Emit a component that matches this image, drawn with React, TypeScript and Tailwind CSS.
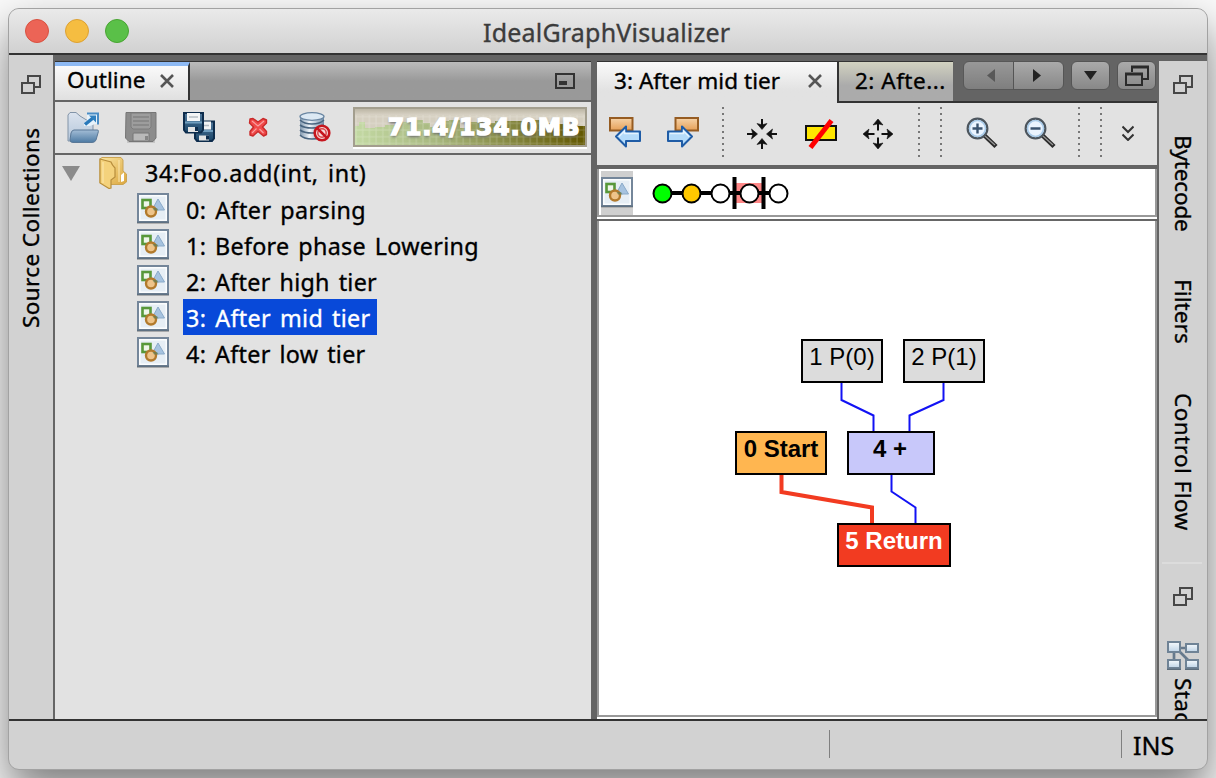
import React from 'react';

const SANS = "font-['Noto_Sans','Open_Sans',sans-serif]";

function RestoreIcon() {
  return (
    <svg width="20" height="19" viewBox="0 0 20 19" fill="none" stroke="#474747" strokeWidth="2" className="block">
      <path d="M7 7V1H19V12H14" />
      <path d="M1 8H13V18H1Z" />
    </svg>
  );
}

function CloseIcon() {
  return (
    <svg width="14" height="14" viewBox="0 0 14 14" stroke="#555" strokeWidth="2.6" className="block">
      <path d="M1 1L13 13M13 1L1 13" />
    </svg>
  );
}

function OpenIcon() {
  return (
    <svg width="32" height="32" viewBox="0 0 32 32" className="block">
      <defs>
        <linearGradient id="openBack" x1="0" y1="0" x2="0" y2="1">
          <stop offset="0" stopColor="#dbe3ee" />
          <stop offset="1" stopColor="#b4c6da" />
        </linearGradient>
        <linearGradient id="openFront" x1="0" y1="0" x2="0" y2="1">
          <stop offset="0" stopColor="#a3bdd6" />
          <stop offset="1" stopColor="#4d7aa3" />
        </linearGradient>
      </defs>
      <path d="M1 29V3L3 .5H9L13 4L26 12V29Z" fill="url(#openBack)" stroke="#8294a8" strokeWidth="1" />
      <path d="M7 18H30C32 18 31.5 19 31 21L29 28Q28 30.500 25 30.500H6Q3 30.500 3 28L4 21Q5 18 7 18Z" fill="url(#openFront)" stroke="#5a7897" strokeWidth="1" />
      <path d="M20 .8H31.200V12H28L23 14H17V12L20 8Z" fill="#e6f2fb" />
      <path d="M20 1.500H31V12.500" stroke="#4a8cc4" strokeWidth="2" fill="none" />
      <path d="M18 12.500L26 6" stroke="#2878ba" strokeWidth="3.500" fill="none" />
      <path d="M22 3.500H29V10.500Z" fill="#2f80bf" />
    </svg>
  );
}

function SaveIcon() {
  return (
    <svg width="32" height="32" viewBox="0 0 32 32" className="block">
      <path d="M2 28H30V31H2Z" fill="#c6c6c6" />
      <path d="M1 .5H31V26L28 29.500H4L.5 26Z" fill="#8c8c8c" stroke="#767676" />
      <path d="M6 1H26V15L24 17H8L6 15Z" fill="#9d9d9d" stroke="#7c7c7c" />
      <path d="M8 5H24M8 9H24M8 13H24" stroke="#838383" strokeWidth="1.500" />
      <path d="M8 22Q8 21 9 21H24V29H8Z" fill="#b9b9b9" stroke="#777" />
      <path d="M20 24H23V28H20Z" fill="#858585" />
    </svg>
  );
}

function Disk({ x, y }: { x: number; y: number }) {
  return (
    <g transform={`translate(${x} ${y})`}>
      <path d="M1 1H20V18L18 20.500H3L1 18Z" fill="url(#diskBody)" stroke="#0d2c4c" strokeWidth="2" />
      <path d="M4 1H17V9H4Z" fill="#f3f5f6" />
      <path d="M6 5H15" stroke="#b4bcc3" strokeWidth="1.500" />
      <path d="M2 10.500H19" stroke="#6f9dbe" strokeWidth="2" />
      <path d="M5 15H15V20H5Z" fill="#e2e3e3" />
      <path d="M12 15H15V19H12Z" fill="#0d2c4c" />
    </g>
  );
}

function SaveAllIcon() {
  return (
    <svg width="32" height="32" viewBox="0 0 32 32" className="block">
      <defs>
        <linearGradient id="diskBody" x1="0" y1="0" x2="0" y2="1">
          <stop offset="0" stopColor="#52799b" />
          <stop offset="1" stopColor="#194467" />
        </linearGradient>
      </defs>
      <Disk x={11} y={8.5} />
      <Disk x={0} y={0} />
    </svg>
  );
}

function DeleteIcon() {
  return (
    <svg width="32" height="32" viewBox="0 0 32 32" className="block">
      <path d="M9 7L12 6.500L17 10L22 6.500L25.500 8V11L21.500 15L25.500 19.500V22.500L22.500 24L17 19.500L12 24L9 23V19.500L12.500 15L8.500 11Z" fill="#f04a4a" stroke="#c92a2a" strokeWidth="1.400" strokeLinejoin="round" />
      <path d="M11 9L17 14L23 9M11 21L15.500 16.500M22.500 21L18.500 17" stroke="#f9a0a0" strokeWidth="1.200" fill="none" />
    </svg>
  );
}

function DatabaseIcon() {
  return (
    <svg width="32" height="32" viewBox="0 0 32 32" className="block">
      <defs>
        <linearGradient id="dbBody" x1="0" y1="0" x2="1" y2="0">
          <stop offset="0" stopColor="#8299b0" />
          <stop offset=".4" stopColor="#f0f5fa" />
          <stop offset="1" stopColor="#718ca8" />
        </linearGradient>
      </defs>
      <path d="M1 4V24Q5 28 13 28T25 24V4Z" fill="url(#dbBody)" />
      <path d="M1 8Q5 12 13 12T25 8M1 13Q5 16 13 16T25 13M1 18Q5 21 13 21T25 18M1 23Q5 27 13 27T25 23" fill="none" stroke="#49647f" strokeWidth="1.600" />
      <ellipse cx="13" cy="4.500" rx="12" ry="3.800" fill="#dce9f4" stroke="#6a86a2" strokeWidth="1.300" />
      <circle cx="23" cy="21" r="7.300" fill="#f6dada" stroke="#c6161e" strokeWidth="2.600" />
      <circle cx="23" cy="21" r="4.200" fill="none" stroke="#d9474c" strokeWidth="1.500" />
      <path d="M18 16L28 26" stroke="#c6161e" strokeWidth="2.500" />
    </svg>
  );
}

function GraphIcon() {
  return (
    <svg width="32" height="32" viewBox="0 0 32 32" className="block">
      <path d="M0 30H32V31H0Z" fill="#b0b0b0" />
      <rect x="1" y="1" width="30" height="28" fill="#e6eef5" stroke="#74869a" strokeWidth="2" />
      <rect x="2.750" y="2.750" width="26.500" height="24.500" fill="none" stroke="#fbfdfe" strokeWidth="1.500" />
      <path d="M0 29.300H32" stroke="#5f7182" strokeWidth="1.600" />
      <rect x="5.500" y="7" width="8" height="8" fill="#eff6ea" stroke="#58983a" strokeWidth="2.600" />
      <path d="M21 6L27.500 17H15Z" fill="#a6c3e0" stroke="#8aaac9" strokeWidth="1" />
      <circle cx="14" cy="18.500" r="5" fill="#eec48a" stroke="#b27a2c" strokeWidth="2.400" />
      <path d="M15.500 15H20L21.500 17.500H17Z" fill="#5d7d55" opacity=".65" />
    </svg>
  );
}

function FolderIcon() {
  return (
    <svg width="28" height="32" viewBox="0 0 28 32" className="block">
      <defs>
        <linearGradient id="folderFill" x1="0" y1="0" x2="1" y2="1">
          <stop offset="0" stopColor="#fbe6a2" />
          <stop offset="1" stopColor="#dba63e" />
        </linearGradient>
      </defs>
      <path d="M1 2L3 .5H22L24 3V14L27.500 17V25L24 27.500H12L1 26Z" fill="url(#folderFill)" stroke="#cba452" strokeWidth="1" />
      <path d="M22 18L25 15.500V24L22 25Z" fill="#fff" />
      <path d="M1 2L12 5Q13 8 16 11V20L12 23V31L10 31.500L1 26Z" fill="#f4d27c" stroke="#b88e3c" strokeWidth="1.200" />
      <path d="M4 5V26M20 3V25" stroke="#fbe8ae" strokeWidth="1.500" opacity=".7" />
    </svg>
  );
}

function StepIcon({ forward }: { forward?: boolean }) {
  return (
    <svg width="32" height="32" viewBox="0 0 32 32" className="block">
      <defs>
        <linearGradient id="stepBox" x1="0" y1="0" x2="0" y2="1">
          <stop offset="0" stopColor="#f6d3a8" />
          <stop offset="1" stopColor="#e6a058" />
        </linearGradient>
      </defs>
      <g transform={forward ? 'translate(32 0) scale(-1 1)' : undefined}>
        <rect x="1" y="1" width="22.500" height="12.500" fill="url(#stepBox)" stroke="#965c22" strokeWidth="2" />
        <path d="M7 19.500L17 9.500V14.500H31V24H17V29.500Z" fill="#b4dbfa" stroke="#1f5ca6" strokeWidth="2" strokeLinejoin="round" />
        <path d="M10 19.500L15.500 14V16.500H29" fill="none" stroke="#e4f3ff" strokeWidth="1.500" />
      </g>
    </svg>
  );
}

function ArrowsIcon({ outward }: { outward?: boolean }) {
  return (
    <svg width="32" height="32" viewBox="0 0 32 32" className="block">
      {[0, 90, 180, 270].map((angle) => (
        <g key={angle} transform={`rotate(${angle} 16 16)`}>
          <path d={outward ? 'M16 12.500V4' : 'M16 1V9'} stroke="#111" strokeWidth="2" />
          <path d={outward ? 'M16 1L21 7L16 5.800L11 7Z' : 'M16 11.500L21 5.500L16 6.800L11 5.500Z'} fill="#111" stroke="#111" strokeWidth=".6" />
        </g>
      ))}
    </svg>
  );
}

function HideIcon() {
  return (
    <svg width="32" height="32" viewBox="0 0 32 32" className="block">
      <rect x="1" y="8" width="30" height="14" fill="#ffe600" stroke="#111" strokeWidth="2" />
      <path d="M5.500 29.500L26.500 2.500" stroke="#f00" strokeWidth="5" />
    </svg>
  );
}

function ZoomIcon({ plus }: { plus?: boolean }) {
  return (
    <svg width="32" height="32" viewBox="0 0 32 32" className="block">
      <path d="M18 18L30 29.500" stroke="#2b2b2b" strokeWidth="4.500" />
      <path d="M19 19L29 28" stroke="#999" strokeWidth="1.200" />
      <circle cx="11.500" cy="11.500" r="9.800" fill="#eaf4ff" stroke="#4d565e" strokeWidth="2.300" />
      <circle cx="11.500" cy="11.500" r="8" fill="none" stroke="#a9cbe9" strokeWidth="1.600" />
      <path d={plus ? 'M6.500 11.500H16.500M11.500 6.500V16.500' : 'M6.500 11.500H16.500'} stroke="#3b5470" strokeWidth="2.400" />
    </svg>
  );
}

function NetworkIcon() {
  const boxes = [
    [1, 1, 12, 10],
    [19, 3, 12, 8],
    [1, 19, 12, 8],
    [19, 19, 12, 8],
  ];
  return (
    <svg width="32" height="30" viewBox="0 0 32 30" className="block">
      <defs>
        <linearGradient id="netBox" x1="0" y1="0" x2="0" y2="1">
          <stop offset="0" stopColor="#f6fafd" />
          <stop offset="1" stopColor="#bed3e6" />
        </linearGradient>
      </defs>
      <path d="M12 7H20M7 10V20M11 9L22 20" stroke="#66798c" strokeWidth="2.700" />
      {boxes.map(([x, y, w, h]) => (
        <rect key={`${x}-${y}`} x={x} y={y} width={w} height={h} fill="url(#netBox)" stroke="#6f8396" strokeWidth="2" />
      ))}
      <path d="M0 28.300H14M18 28.300H32" stroke="#5c6c7b" strokeWidth="1.200" />
    </svg>
  );
}

function MemoryMeter() {
  return (
    <div className="relative h-[40px] w-[234px] border-2 border-[#a39e8e] bg-[#d5cfc0] shadow-[0_2px_0_#fff]">
      <svg width="230" height="36" viewBox="0 0 230 36" className="block">
        <defs>
          <linearGradient id="memFill" x1="0" y1="0" x2="1" y2="0">
            <stop offset="0" stopColor="#c3d9a3" />
            <stop offset=".35" stopColor="#a8b880" />
            <stop offset="1" stopColor="#625700" />
          </linearGradient>
          <linearGradient id="memTop" x1="0" y1="0" x2="0" y2="1">
            <stop offset="0" stopColor="#bcb6a5" />
            <stop offset="1" stopColor="#d8d2c5" />
          </linearGradient>
          <pattern id="memGrid" width="6.700" height="6.700" patternUnits="userSpaceOnUse">
            <path d="M0 1H7M1 0V7" stroke="#fff" strokeOpacity=".23" strokeWidth="1" fill="none" />
          </pattern>
        </defs>
        <rect width="230" height="6" fill="url(#memTop)" />
        <path d="M0 36V17H4V13H10V19H20V18H30V16H45V13H55V11H68V14H75V18H82V12H94V11H105V19H113V13H128V14H140V12H175V11H186V14H200V15H216V17H230V36Z" fill="url(#memFill)" />
        <rect y="6" width="230" height="30" fill="url(#memGrid)" />
      </svg>
      <span className="absolute top-[4px] left-[33px] font-['DejaVu_Sans',sans-serif] text-[23px] leading-[28px] font-bold tracking-[1.2px] whitespace-nowrap text-white [-webkit-text-stroke:1.7px_white] [text-shadow:0_2px_3px_#666]">
        71.4/134.0MB
      </span>
    </div>
  );
}

function Dots({ className }: { className: string }) {
  return (
    <div className={`h-[50px] w-[2px] shrink-0 bg-[repeating-linear-gradient(180deg,#777_0,#777_2px,transparent_2px,transparent_6px)] ${className}`} />
  );
}

const phases = [
  { label: '0: After parsing', tracking: 'tracking-[0.4px]' },
  { label: '1: Before phase Lowering', tracking: 'tracking-[0.3px]' },
  { label: '2: After high tier', tracking: 'tracking-[0.3px]' },
  { label: '3: After mid tier', tracking: 'tracking-[0.35px]', selected: true },
  { label: '4: After low tier', tracking: 'tracking-[0.3px]' },
];

function OutlinePanel() {
  return (
    <section className="flex w-[536px] shrink-0 flex-col bg-[#e2e2e2]">
      <div className="flex h-[41px] border-t border-b-2 border-t-[#333] border-b-[#666] bg-linear-to-b from-[#bbb] to-[#999] to-50%">
        <div className="flex h-[38px] w-[135px] items-start gap-[15px] border-t-4 border-r-2 border-t-[#8db9f3] border-r-[#333] bg-linear-to-b from-[#fafafa] to-[#e0e0e0] pl-[12px]">
          <span className="-mt-[2px] w-[78px] text-[22.500px] leading-[32px] tracking-[0.1px]">Outline</span>
          <div className="pt-[8px]"><CloseIcon /></div>
        </div>
        <svg width="20" height="16" viewBox="0 0 20 16" className="mt-[11px] mr-[16px] ml-auto block">
          <rect x="1" y="1" width="18" height="14" fill="none" stroke="#333" strokeWidth="2" />
          <path d="M4 8H12V12H4Z" fill="#333" />
        </svg>
      </div>
      <div className="flex h-[53px] items-center gap-[26px] border-b-2 border-[#666] pl-[12px]">
        <OpenIcon />
        <SaveIcon />
        <SaveAllIcon />
        <DeleteIcon />
        <DatabaseIcon />
        <div className="-ml-[4px] self-start pt-[5px]">
          <MemoryMeter />
        </div>
      </div>
      <div className="flex h-[36px] items-center text-[23.300px] leading-[38px] [word-spacing:2.500px]">
        <svg width="18" height="15" viewBox="0 0 18 15" className="ml-[7px] block">
          <path d="M0 0H18L9 15Z" fill="#8b8b8b" />
        </svg>
        <div className="ml-[19px]"><FolderIcon /></div>
        <span className="ml-[18px] tracking-[0.7px] whitespace-nowrap">34:Foo.add(int, int)</span>
      </div>
      {phases.map((phase) => (
        <div key={phase.label} className="flex h-[36px] pl-[82px] text-[23.300px] leading-[38px] [word-spacing:2.500px]">
          <div className="pt-[2px]"><GraphIcon /></div>
          <span className={`ml-[14px] h-[36px] px-[3px] whitespace-nowrap ${phase.tracking} ${phase.selected ? 'w-[194px] bg-[#0849d9] text-white' : ''}`}>
            {phase.label}
          </span>
        </div>
      ))}
    </section>
  );
}

function TimeLine() {
  const stops = ['#00ff00', '#ffc800', '#fff', '#fff', '#fff'];
  return (
    <svg width="150" height="46" viewBox="0 0 150 46" className="ml-[12px] block">
      <rect x="90" y="14" width="28" height="20" fill="#ff8888" />
      <path d="M17 24H134" stroke="#000" strokeWidth="4" />
      <path d="M89.500 8V40M118.500 8V40" stroke="#000" strokeWidth="4" />
      {stops.map((fill, i) => (
        <circle key={i} cx={17.5 + i * 29} cy="24.500" r="9" fill={fill} stroke="#000" strokeWidth="2" />
      ))}
    </svg>
  );
}

const nodes = [
  { label: '1 P(0)', box: 'left-[202px] top-[118px] w-[82px] bg-[#dcdcdc]' },
  { label: '2 P(1)', box: 'left-[304px] top-[118px] w-[82px] bg-[#dcdcdc]' },
  { label: '0 Start', box: 'left-[136px] top-[210px] w-[92px] bg-[#ffb650] font-bold' },
  { label: '4 +', box: 'left-[248px] top-[210px] w-[88px] bg-[#c8c8fa] font-bold pr-[2px]' },
  { label: '5 Return', box: 'left-[238px] top-[302px] w-[114px] bg-[#f23b21] font-bold text-white' },
];

function GraphCanvas() {
  return (
    <div className="relative h-[494px] [-webkit-text-stroke:0]">
      <svg width="556" height="494" viewBox="0 0 556 494" className="block" fill="none">
        <g stroke="#1212f4" strokeWidth="2">
          <path d="M242.500 160V179L274.500 194.500V212" />
          <path d="M344.500 160V179L310.500 194.500V212" />
          <path d="M292.500 252V270.500L316.500 286.500V304" />
        </g>
        <path d="M182.500 252V271L273 286.500V304" stroke="#f23b21" strokeWidth="4" />
      </svg>
      {nodes.map((node) => (
        <div key={node.label} className={`absolute h-[44px] border-2 border-black text-center font-['Liberation_Sans',Arial,sans-serif] text-[24px] leading-[32px] whitespace-nowrap ${node.box}`}>
          {node.label}
        </div>
      ))}
    </div>
  );
}

function EditorPanel() {
  const button = 'flex h-[29px] items-center justify-center border border-[#555] bg-linear-to-b from-[#aaa] to-[#888]';
  return (
    <section className="flex w-[560px] shrink-0 flex-col bg-[#e2e2e2]">
      <div className="flex h-[42px] bg-[#646464]">
        <div className="flex w-[240px] shrink-0 items-start border-t border-[#333] bg-linear-to-b from-[#fafafa] to-[#e2e2e2] to-70% pl-[17px]">
          <span className="w-[194px] pt-px text-[22.500px] leading-[36px] tracking-[0.05px] whitespace-nowrap">3: After mid tier</span>
          <div className="pt-[12px]"><CloseIcon /></div>
        </div>
        <div className="flex h-[42px] w-[116px] shrink-0 items-start overflow-hidden border-t border-b-2 border-l-2 border-[#333] bg-linear-to-b from-[#d2d2c0] to-[#ababab] to-60% pl-[16px]">
          <span className="pt-px text-[22.500px] leading-[36px] tracking-[0.5px] whitespace-nowrap">2: Afte...</span>
        </div>
        <div className="flex grow items-start border-b-2 border-[#333] pl-[10px]">
          <div className={`${button} w-[51px] rounded-l-[6px] opacity-75`}>
            <svg width="8" height="13" viewBox="0 0 8 13" className="ml-[4px]"><path d="M8 0V13L0 6.500Z" fill="#555" /></svg>
          </div>
          <div className={`${button} -ml-px w-[51px] rounded-r-[6px]`}>
            <svg width="8" height="13" viewBox="0 0 8 13" className="mr-[3px]"><path d="M0 0V13L8 6.500Z" fill="#222" /></svg>
          </div>
          <div className={`${button} ml-[7px] w-[39px] rounded-[6px]`}>
            <svg width="13" height="9" viewBox="0 0 13 9"><path d="M0 0H13L6.500 9Z" fill="#222" /></svg>
          </div>
          <div className={`${button} ml-[7px] w-[39px] rounded-[6px]`}>
            <svg width="24" height="22" viewBox="0 0 24 22" fill="none" stroke="#2b2b2b" strokeWidth="2">
              <path d="M7 7V2H23V14H18M1 9H17V20H1Z" />
              <path d="M6 2H24M0 9H18" strokeWidth="3" />
            </svg>
          </div>
        </div>
      </div>
      <div className="flex h-[66px] shrink-0 border-b-4 border-[#646464] pt-[4px] pl-[12px]">
        <div className="mt-[10px]"><StepIcon /></div>
        <div className="mt-[10px] ml-[26px]"><StepIcon forward /></div>
        <Dots className="ml-[23px]" />
        <div className="mt-[11px] ml-[22px]"><ArrowsIcon /></div>
        <div className="mt-[11px] ml-[27px]"><HideIcon /></div>
        <div className="mt-[11px] ml-[25px]"><ArrowsIcon outward /></div>
        <Dots className="ml-[24px]" />
        <Dots className="ml-[20px]" />
        <div className="mt-[10px] ml-[24px]"><ZoomIcon plus /></div>
        <div className="mt-[10px] ml-[26px]"><ZoomIcon /></div>
        <Dots className="ml-[22px]" />
        <Dots className="ml-[20px]" />
        <svg width="12" height="16" viewBox="0 0 12 16" fill="none" stroke="#333" strokeWidth="2" className="mt-[18px] ml-[20px] block">
          <path d="M.5 1.500L6 7L11.500 1.500M.5 9.500L6 15L11.500 9.500" />
        </svg>
      </div>
      <div className="flex h-[48px] shrink-0 border-x-2 border-b-2 border-[#999] bg-white pl-[2px]">
        <div className="mt-[2px] h-[44px] w-[32px] bg-[#cfcfcf] pt-[6px]"><GraphIcon /></div>
        <TimeLine />
      </div>
      <div className="h-[2px] shrink-0 bg-white" />
      <div className="h-[2px] shrink-0 bg-[#666]" />
      <div className="border-x-2 border-b-2 border-[#999] bg-white">
        <GraphCanvas />
      </div>
      <div className="h-[2px] bg-white" />
    </section>
  );
}

function SideLabel({ className, children }: { className: string; children: string }) {
  return (
    <span className={`block w-[30px] shrink-0 text-[22.500px] leading-[30px] whitespace-nowrap [writing-mode:vertical-rl] ${className}`}>
      {children}
    </span>
  );
}

export default function App() {
  return (
    <div className={`${SANS} h-[778px] w-[1216px] overflow-hidden bg-[#fafafa] p-[8px] text-black [-webkit-text-stroke:0.35px_currentColor]`}>
      <div className="flex h-[762px] w-[1200px] flex-col overflow-hidden rounded-[11px] border border-[#a2a2a2] bg-[#d2d2d2] shadow-[0_22px_45px_rgba(0,0,0,0.5)]">
        <header className="relative flex h-[46px] shrink-0 items-center border-b-2 border-[#333] bg-linear-to-b from-[#eaeaea] to-[#d1d1d1]">
          <div className="flex gap-[16px] pl-[16px]">
            <i className="size-[24px] rounded-full border border-[#d8503f] bg-[#ec6456]" />
            <i className="size-[24px] rounded-full border border-[#dca032] bg-[#f5bd41]" />
            <i className="size-[24px] rounded-full border border-[#48a432] bg-[#5ac048]" />
          </div>
          <h1 className="mt-[2px] ml-[354px] text-[25px] leading-[32px] tracking-[0.2px] text-[#3c3c3c]">IdealGraphVisualizer</h1>
        </header>
        <div className="flex h-[664px] shrink-0">
          <aside className="flex w-[46px] shrink-0 flex-col border-r-2 border-[#666] pt-[20px] pl-[12px]">
            <RestoreIcon />
            <SideLabel className="mt-[33px] -ml-[5px] h-[201px] rotate-180 tracking-[0.4px]">Source Collections</SideLabel>
          </aside>
          <main className="flex w-[1104px] shrink-0 gap-[6px] border-r-2 border-[#646464] bg-[#646464] pt-[6px]">
            <OutlinePanel />
            <EditorPanel />
          </main>
          <aside className="flex w-[48px] shrink-0 flex-col overflow-hidden border-t-[6px] border-[#646464]">
            <div className="mt-[14px] ml-[14px]"><RestoreIcon /></div>
            <SideLabel className="mt-[41px] ml-[9px] h-[97px] tracking-[-0.15px]">Bytecode</SideLabel>
            <SideLabel className="mt-[47px] ml-[9px] h-[66px] tracking-[0.1px]">Filters</SideLabel>
            <SideLabel className="mt-[48px] ml-[9px] h-[138px] tracking-[0.45px]">Control Flow</SideLabel>
            <div className="mt-[31px] ml-[3px] h-[2px] w-[40px] shrink-0 bg-[#dcdcdc]" />
            <div className="mt-[23px] ml-[14px] shrink-0"><RestoreIcon /></div>
            <div className="mt-[35px] ml-[8px] shrink-0"><NetworkIcon /></div>
            <SideLabel className="mt-[7px] ml-[9px] tracking-[0.4px]">Stack View</SideLabel>
          </aside>
        </div>
        <footer className="flex h-[50px] shrink-0 border-t-2 border-[#333]">
          <div className="mt-[9px] ml-[820px] h-[28px] w-px bg-[#808080]" />
          <div className="mt-[9px] ml-[291px] h-[28px] w-px bg-[#808080]" />
          <span className="mt-[8px] ml-[11px] text-[25px] leading-[32px]">INS</span>
        </footer>
      </div>
    </div>
  );
}
